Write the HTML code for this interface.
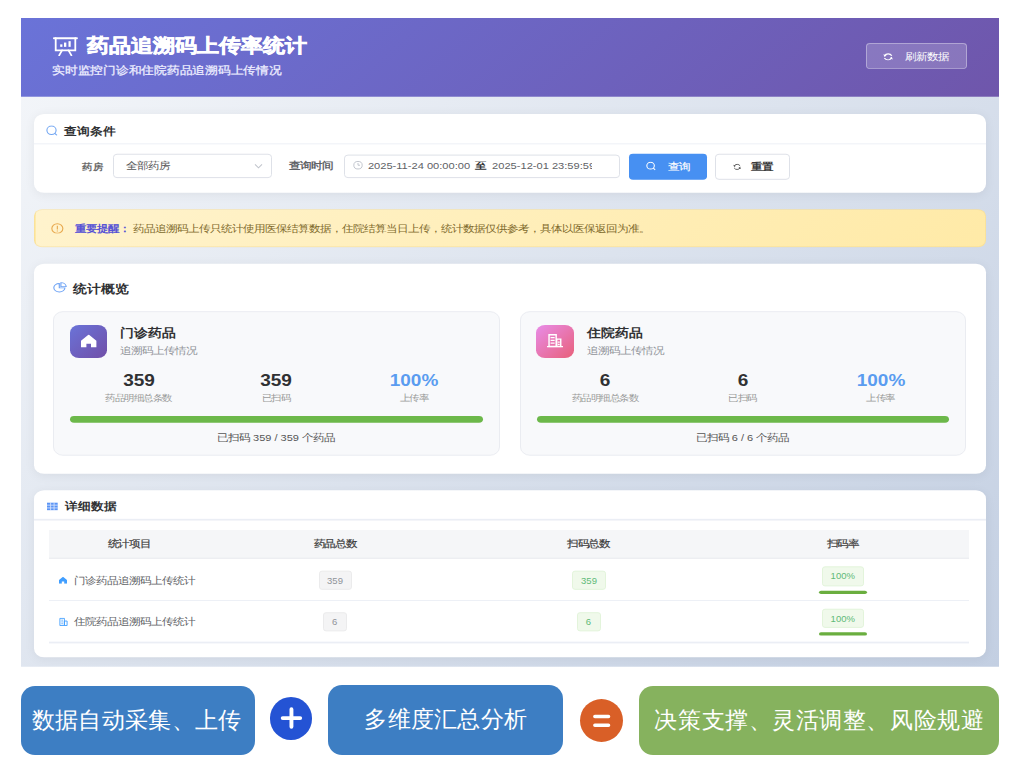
<!DOCTYPE html>
<html><head><meta charset="utf-8">
<style>
*{margin:0;padding:0;box-sizing:border-box}
html,body{width:1026px;height:778px;overflow:hidden;background:#fff;font-family:"Liberation Sans",sans-serif;color:#303133}
.abs{position:absolute}
#dash{position:absolute;left:21px;top:18px;width:978px;height:749.71px;transform:scaleY(0.865);transform-origin:0 0;background:linear-gradient(135deg,#f5f7fa 0%,#c3cfe2 100%);overflow:hidden}
.t{position:absolute;white-space:nowrap;line-height:1}
.bot{position:absolute;top:686px;height:69px;border-radius:14px;color:#fff;font-size:23px;line-height:69px;text-align:center;white-space:nowrap}
.circ{position:absolute;top:697.5px;width:42.5px;height:42.5px;border-radius:50%}
</style></head><body>
<div id="dash">
<div class="abs" style="left:0.00px;top:0.00px;width:978.00px;height:91.33px;background:linear-gradient(135deg,#6a73d8 0%,#6f56ab 100%)"></div>
<svg class="abs" style="left:32.00px;top:20.81px;" width="25" height="23.12" viewBox="0 0 25 20" preserveAspectRatio="none"><g stroke="#fff" stroke-width="1.8" fill="none" stroke-linecap="round"><path d="M0.9 2.1H24"/><path d="M2.7 2.1V14.2H22.3V2.1"/><path d="M9 14.2L6.2 19.2M15.5 14.2L18.4 19.2"/></g><g fill="#fff"><rect x="7.2" y="8.2" width="2.2" height="2.5"/><rect x="11" y="6.4" width="2.3" height="4.3"/><rect x="15.5" y="5" width="2.2" height="5.7"/></g></svg>
<div class="t" style="left:66.00px;top:20.81px;font-size:22px;color:#fff;font-weight:bold;-webkit-text-stroke:0.7px #fff">药品追溯码上传率统计</div>
<div class="t" style="left:31.00px;top:55.49px;font-size:12.6px;color:#eef;font-weight:normal;-webkit-text-stroke:0.3px #eef;letter-spacing:-0.25px">实时监控门诊和住院药品追溯码上传情况</div>
<div class="abs" style="left:845.00px;top:29.25px;width:100.50px;height:29.94px;border:1px solid rgba(255,255,255,.35);background:rgba(255,255,255,.18);border-radius:4px"></div>
<svg class="abs" style="left:862.20px;top:39.54px;" width="10.2" height="9.94" viewBox="0 0 10 10" preserveAspectRatio="none"><path d="M1.5 3.6A4 4 0 0 1 8.6 3.6M8.5 6.4A4 4 0 0 1 1.4 6.4" fill="none" stroke="#fff" stroke-width="1.25"/><path d="M0.4 2L1.4 5.2 3.6 3.4zM9.6 8L8.6 4.8 6.4 6.6z" fill="#fff"/></svg>
<div class="t" style="left:883.60px;top:38.73px;font-size:11.3px;color:#fff;font-weight:normal;">刷新数据</div>
<div class="abs" style="left:13.00px;top:110.98px;width:952.00px;height:91.33px;background:#fff;border-radius:10px;box-shadow:0 2px 12px rgba(0,0,0,.06)"></div>
<div class="abs" style="left:13.00px;top:144.51px;width:952.00px;height:1.39px;background:#ebeef5"></div>
<svg class="abs" style="left:25.00px;top:123.70px;" width="12" height="12.72" viewBox="0 0 12 12" preserveAspectRatio="none"><circle cx="5.5" cy="5.5" r="4.6" fill="none" stroke="#72a6f2" stroke-width="1.1"/><line x1="8.8" y1="8.8" x2="11" y2="11" stroke="#72a6f2" stroke-width="1.1"/></svg>
<div class="t" style="left:43.30px;top:124.28px;font-size:13px;color:#303133;font-weight:bold;">查询条件</div>
<div class="t" style="left:60.50px;top:167.05px;font-size:10.5px;color:#6a6a6a;font-weight:bold;">药房</div>
<div class="abs" style="left:91.70px;top:157.23px;width:159.00px;height:28.09px;border:1px solid #dcdfe6;border-radius:4px;background:#fff"></div>
<div class="t" style="left:105.00px;top:166.47px;font-size:11px;color:#555;font-weight:normal;">全部药房</div>
<svg class="abs" style="left:233.00px;top:167.63px;" width="9" height="6.94" viewBox="0 0 9 6" preserveAspectRatio="none"><path d="M1 1l3.5 3.5L8 1" fill="none" stroke="#c0c4cc" stroke-width="1"/></svg>
<div class="t" style="left:268.00px;top:165.90px;font-size:11px;color:#606266;font-weight:bold;">查询时间</div>
<div class="abs" style="left:322.60px;top:157.69px;width:276.00px;height:27.51px;border:1px solid #dcdfe6;border-radius:4px;background:#fff"></div>
<svg class="abs" style="left:331.70px;top:165.32px;" width="10" height="10.40" viewBox="0 0 10 10" preserveAspectRatio="none"><circle cx="5" cy="5" r="4.2" fill="none" stroke="#c0c4cc" stroke-width="1"/><path d="M5 2.5V5h2" fill="none" stroke="#c0c4cc" stroke-width="1"/></svg>
<div class="t" style="left:346.90px;top:165.90px;font-size:11px;color:#606266;font-weight:normal;width:223.7px;overflow:hidden;height:14px;font-size:11.1px">2025-11-24 00:00:00<b style="color:#303133;margin:0 6px 0 5px">至</b>2025-12-01 23:59:59</div>
<div class="abs" style="left:608.00px;top:157.23px;width:78.40px;height:29.36px;background:#4790f2;border-radius:4px"></div>
<svg class="abs" style="left:625.00px;top:166.47px;" width="10" height="10.40" viewBox="0 0 12 12" preserveAspectRatio="none"><circle cx="5.5" cy="5.5" r="4.5" fill="none" stroke="#fff" stroke-width="1.3"/><line x1="8.8" y1="8.8" x2="11" y2="11" stroke="#fff" stroke-width="1.3"/></svg>
<div class="t" style="left:646.60px;top:166.82px;font-size:11px;color:#fff;font-weight:normal;-webkit-text-stroke:0.2px #fff">查询</div>
<div class="abs" style="left:694.00px;top:157.23px;width:75.40px;height:29.36px;border:1px solid #dcdfe6;border-radius:4px;background:#fff"></div>
<svg class="abs" style="left:712.00px;top:168.21px;" width="8.3" height="8.32" viewBox="0 0 10 10" preserveAspectRatio="none"><path d="M1.5 3.6A4 4 0 0 1 8.6 3.6M8.5 6.4A4 4 0 0 1 1.4 6.4" fill="none" stroke="#555" stroke-width="1.2"/><path d="M0.4 2L1.4 5.2 3.6 3.4zM9.6 8L8.6 4.8 6.4 6.6z" fill="#555"/></svg>
<div class="t" style="left:729.60px;top:166.82px;font-size:11px;color:#3a3a3a;font-weight:bold;">重置</div>
<div class="abs" style="left:13.00px;top:221.27px;width:952.00px;height:43.24px;border-radius:8px;border:1px solid rgba(240,210,130,.35);background:linear-gradient(135deg,#fff3cd 0%,#ffeaa7 100%)"></div>
<svg class="abs" style="left:30.00px;top:236.76px;" width="12.7" height="12.72" viewBox="0 0 12 12" preserveAspectRatio="none"><circle cx="6" cy="6" r="5.2" fill="none" stroke="#e9ab52" stroke-width="1.1"/><path d="M6 3v4M6 8.3v1" stroke="#e9ab52" stroke-width="1.1"/></svg>
<div class="t" style="left:53.60px;top:238.15px;font-size:11px;color:#4a46d6;font-weight:normal;-webkit-text-stroke:0.35px #4a46d6">重要提醒：</div>
<div class="t" style="left:112.00px;top:238.15px;font-size:11.12px;color:#806a2c;font-weight:normal;">药品追溯码上传只统计使用医保结算数据，住院结算当日上传，统计数据仅供参考，具体以医保返回为准。</div>
<div class="abs" style="left:13.00px;top:284.16px;width:952.00px;height:243.01px;background:#fff;border-radius:10px;box-shadow:0 2px 12px rgba(0,0,0,.06)"></div>
<svg class="abs" style="left:32.30px;top:305.20px;" width="14.2" height="12.49" viewBox="0 0 14 14" preserveAspectRatio="none"><path d="M6.2 2.2A5.5 5.5 0 1 0 11.8 7.8H6.2z" fill="none" stroke="#6ea3f5" stroke-width="1.1"/><path d="M7.8 1v5.2H13A5.4 5.4 0 0 0 7.8 1z" fill="none" stroke="#6ea3f5" stroke-width="1.1"/></svg>
<div class="t" style="left:52.00px;top:306.94px;font-size:13.6px;color:#303133;font-weight:bold;">统计概览</div>
<div class="abs" style="left:32.30px;top:338.73px;width:446.70px;height:167.63px;background:#f8f9fb;border:1px solid #e8ebf0;border-radius:10px"></div>
<div class="abs" style="left:48.60px;top:354.91px;width:37.90px;height:37.80px;border-radius:9px;background:linear-gradient(135deg,#6a73d8 0%,#714fa8 100%)"></div>
<svg class="abs" style="left:60.20px;top:366.36px;" width="15.4" height="14.91" viewBox="0 0 16 13" preserveAspectRatio="none"><path d="M8 0L0 6.2V13h5.6V9.2h4.8V13H16V6.2z" fill="#fff"/></svg>
<div class="t" style="left:99.00px;top:357.23px;font-size:14.4px;color:#303133;font-weight:bold;">门诊药品</div>
<div class="t" style="left:99.00px;top:379.19px;font-size:11px;color:#909399;font-weight:normal;">追溯码上传情况</div>
<div class="t" style="left:-82.50px;width:400px;text-align:center;top:409.25px;font-size:20px;color:#303133;font-weight:bold;transform:scaleX(0.95)">359</div>
<div class="t" style="left:-82.50px;width:400px;text-align:center;top:435.26px;font-size:10px;color:#999;font-weight:normal;letter-spacing:-0.45px">药品明细总条数</div>
<div class="t" style="left:55.00px;width:400px;text-align:center;top:409.25px;font-size:20px;color:#303133;font-weight:bold;transform:scaleX(0.95)">359</div>
<div class="t" style="left:55.00px;width:400px;text-align:center;top:435.26px;font-size:10px;color:#999;font-weight:normal;letter-spacing:-0.45px">已扫码</div>
<div class="t" style="left:193.00px;width:400px;text-align:center;top:409.25px;font-size:20px;color:#5a9cf0;font-weight:bold;transform:scaleX(0.95)">100%</div>
<div class="t" style="left:193.00px;width:400px;text-align:center;top:435.26px;font-size:10px;color:#999;font-weight:normal;letter-spacing:-0.45px">上传率</div>
<div class="abs" style="left:49.00px;top:460.12px;width:412.50px;height:7.51px;background:#6cb84a;border-radius:4px"></div>
<div class="t" style="left:55.00px;width:400px;text-align:center;top:480.35px;font-size:11px;color:#555;font-weight:normal;">已扫码 359 / 359 个药品</div>
<div class="abs" style="left:498.80px;top:338.73px;width:446.70px;height:167.63px;background:#f8f9fb;border:1px solid #e8ebf0;border-radius:10px"></div>
<div class="abs" style="left:515.10px;top:354.91px;width:37.90px;height:37.80px;border-radius:9px;background:linear-gradient(135deg,#e88ce8 0%,#e8607a 100%)"></div>
<svg class="abs" style="left:526.00px;top:365.32px;" width="16.3" height="15.95" viewBox="0 0 16 14" preserveAspectRatio="none"><path d="M2 1h7v12H2z M9.5 5.5h4v7.5h-4z" fill="none" stroke="#fff" stroke-width="1.4"/><path d="M3.5 4h4M3.5 6.8h4M3.5 9.6h4M10.5 8.5h2M10.5 10.8h2" stroke="#fff" stroke-width="1.3"/><path d="M0 13.2h16" stroke="#fff" stroke-width="1.5"/></svg>
<div class="t" style="left:565.50px;top:357.23px;font-size:14.4px;color:#303133;font-weight:bold;">住院药品</div>
<div class="t" style="left:565.50px;top:379.19px;font-size:11px;color:#909399;font-weight:normal;">追溯码上传情况</div>
<div class="t" style="left:384.00px;width:400px;text-align:center;top:409.25px;font-size:20px;color:#303133;font-weight:bold;transform:scaleX(0.95)">6</div>
<div class="t" style="left:384.00px;width:400px;text-align:center;top:435.26px;font-size:10px;color:#999;font-weight:normal;letter-spacing:-0.45px">药品明细总条数</div>
<div class="t" style="left:521.50px;width:400px;text-align:center;top:409.25px;font-size:20px;color:#303133;font-weight:bold;transform:scaleX(0.95)">6</div>
<div class="t" style="left:521.50px;width:400px;text-align:center;top:435.26px;font-size:10px;color:#999;font-weight:normal;letter-spacing:-0.45px">已扫码</div>
<div class="t" style="left:659.50px;width:400px;text-align:center;top:409.25px;font-size:20px;color:#5a9cf0;font-weight:bold;transform:scaleX(0.95)">100%</div>
<div class="t" style="left:659.50px;width:400px;text-align:center;top:435.26px;font-size:10px;color:#999;font-weight:normal;letter-spacing:-0.45px">上传率</div>
<div class="abs" style="left:515.50px;top:460.12px;width:412.50px;height:7.51px;background:#6cb84a;border-radius:4px"></div>
<div class="t" style="left:521.50px;width:400px;text-align:center;top:480.35px;font-size:11px;color:#555;font-weight:normal;">已扫码 6 / 6 个药品</div>
<div class="abs" style="left:13.00px;top:545.66px;width:952.00px;height:193.64px;background:#fff;border-radius:10px;box-shadow:0 2px 12px rgba(0,0,0,.06)"></div>
<svg class="abs" style="left:26.10px;top:559.54px;" width="10.7" height="9.60" viewBox="0 0 11 9" preserveAspectRatio="none"><rect x="0" y="0" width="11" height="9" fill="#5b95f5"/><path d="M3.7 0v9M7.3 0v9M0 3h11M0 6h11" stroke="#fff" stroke-width=".9" opacity=".75"/></svg>
<div class="t" style="left:44.00px;top:558.96px;font-size:12.6px;color:#303133;font-weight:bold;">详细数据</div>
<div class="abs" style="left:13.00px;top:579.19px;width:952.00px;height:1.39px;background:#ebeef5"></div>
<div class="abs" style="left:28.00px;top:591.91px;width:920.00px;height:33.53px;background:#f5f6f8;border-bottom:1px solid #e6e8ee"></div>
<div class="t" style="left:-92.00px;width:400px;text-align:center;top:603.47px;font-size:11px;color:#3c3c3c;font-weight:normal;-webkit-text-stroke:0.2px #3c3c3c;letter-spacing:-0.35px">统计项目</div>
<div class="t" style="left:114.00px;width:400px;text-align:center;top:603.47px;font-size:11px;color:#3c3c3c;font-weight:normal;-webkit-text-stroke:0.2px #3c3c3c;letter-spacing:-0.35px">药品总数</div>
<div class="t" style="left:367.50px;width:400px;text-align:center;top:603.47px;font-size:11px;color:#3c3c3c;font-weight:normal;-webkit-text-stroke:0.2px #3c3c3c;letter-spacing:-0.35px">扫码总数</div>
<div class="t" style="left:621.50px;width:400px;text-align:center;top:603.47px;font-size:11px;color:#3c3c3c;font-weight:normal;-webkit-text-stroke:0.2px #3c3c3c;letter-spacing:-0.35px">扫码率</div>
<div class="abs" style="left:28.00px;top:672.83px;width:920.00px;height:1.16px;background:#ebeef5"></div>
<div class="t" style="left:53.00px;top:644.51px;font-size:11px;color:#606266;font-weight:normal;">门诊药品追溯码上传统计</div>
<svg class="abs" style="left:38.00px;top:645.66px;" width="8" height="8.09" viewBox="0 0 10 9" preserveAspectRatio="none"><path d="M5 0L0 4.2V9h3.5V6h3v3H10V4.2z" fill="#409eff"/></svg>
<div class="abs" style="left:297.50px;top:638.73px;width:33.00px;height:21.97px;background:#f4f4f5;border:1px solid #e9e9eb;border-radius:3px"></div>
<div class="t" style="left:114.00px;width:400px;text-align:center;top:645.66px;font-size:9.5px;color:#909399;font-weight:normal;">359</div>
<div class="abs" style="left:551.00px;top:638.73px;width:34.00px;height:21.97px;background:#f0f9eb;border:1px solid #e1f3d8;border-radius:3px"></div>
<div class="t" style="left:368.00px;width:400px;text-align:center;top:645.66px;font-size:9.5px;color:#5fba78;font-weight:normal;">359</div>
<div class="abs" style="left:800.50px;top:634.10px;width:42.50px;height:22.54px;background:#f0f9eb;border:1px solid #e1f3d8;border-radius:3px"></div>
<div class="t" style="left:621.75px;width:400px;text-align:center;top:641.04px;font-size:9.5px;color:#5fba78;font-weight:normal;">100%</div>
<div class="abs" style="left:798.00px;top:661.85px;width:47.50px;height:4.05px;background:#6aae3f;border-radius:2px"></div>
<div class="abs" style="left:28.00px;top:721.39px;width:920.00px;height:1.16px;background:#ebeef5"></div>
<div class="t" style="left:53.00px;top:693.06px;font-size:11px;color:#606266;font-weight:normal;">住院药品追溯码上传统计</div>
<svg class="abs" style="left:38.00px;top:693.06px;" width="9" height="10.40" viewBox="0 0 10 10" preserveAspectRatio="none"><path d="M1 1h5v8H1zM6 4h3v5H6z" fill="none" stroke="#409eff" stroke-width="1"/><path d="M2.5 3h2M2.5 5h2M2.5 7h2" stroke="#409eff" stroke-width=".8"/></svg>
<div class="abs" style="left:302.00px;top:687.28px;width:23.50px;height:21.97px;background:#f4f4f5;border:1px solid #e9e9eb;border-radius:3px"></div>
<div class="t" style="left:113.75px;width:400px;text-align:center;top:694.22px;font-size:9.5px;color:#909399;font-weight:normal;">6</div>
<div class="abs" style="left:555.50px;top:687.28px;width:24.00px;height:21.97px;background:#f0f9eb;border:1px solid #e1f3d8;border-radius:3px"></div>
<div class="t" style="left:367.50px;width:400px;text-align:center;top:694.22px;font-size:9.5px;color:#5fba78;font-weight:normal;">6</div>
<div class="abs" style="left:800.50px;top:682.66px;width:42.50px;height:22.54px;background:#f0f9eb;border:1px solid #e1f3d8;border-radius:3px"></div>
<div class="t" style="left:621.75px;width:400px;text-align:center;top:689.60px;font-size:9.5px;color:#5fba78;font-weight:normal;">100%</div>
<div class="abs" style="left:798.00px;top:710.40px;width:47.50px;height:4.05px;background:#6aae3f;border-radius:2px"></div>
</div>
<div class="bot" style="left:21px;width:234px;background:#3d7ec3;font-size:23px;letter-spacing:0.3px;padding-right:2.5px">数据自动采集、上传</div>
<div class="circ" style="left:269.7px;top:697.3px;width:42.4px;height:42.4px;background:#2453d4"><svg width="42.4" height="42.4" viewBox="0 0 42.4 42.4" style="display:block"><path d="M21.45 12.2v17.5M12.7 21.1h17.5" stroke="#fff" stroke-width="3.9" stroke-linecap="round"/></svg></div>
<div class="bot" style="left:328.3px;width:235px;background:#3d7ec3;letter-spacing:0.3px;top:685.3px;height:70px">多维度汇总分析</div>
<div class="circ" style="left:579.6px;top:698.5px;width:43.6px;height:43.5px;background:#d95f27"><svg width="43.6" height="43.5" viewBox="0 0 43.6 43.5" style="display:block"><path d="M14.9 17.5h13.6M14.9 26.2h13.6" stroke="#fff" stroke-width="3.6" stroke-linecap="round"/></svg></div>
<div class="bot" style="left:639.3px;width:359.5px;background:#86b25e;letter-spacing:0.55px;padding-left:0.55px">决策支撑、灵活调整、风险规避</div>
</body></html>
